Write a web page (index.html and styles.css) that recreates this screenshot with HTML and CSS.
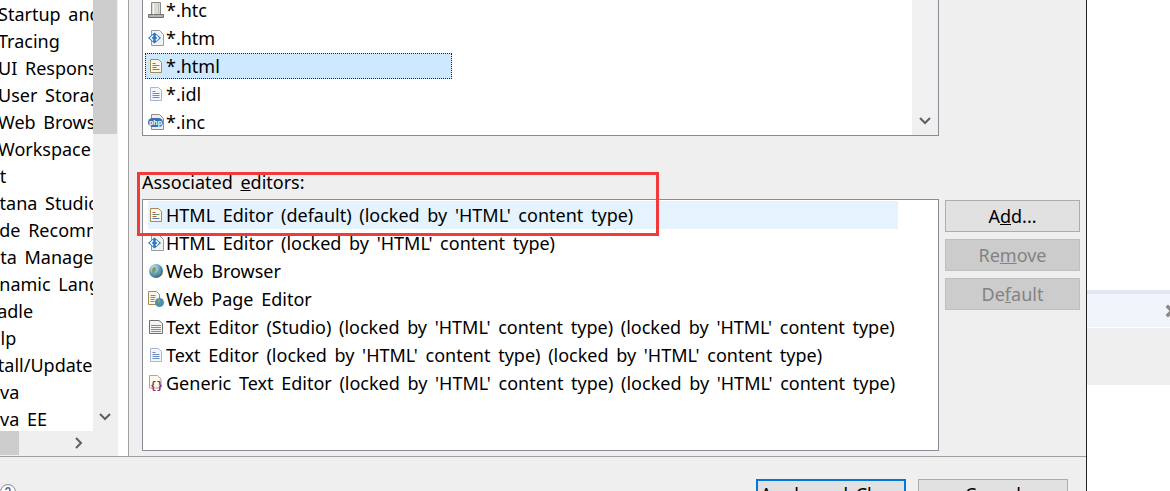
FILE: index.html
```html
<!DOCTYPE html>
<html lang="en">
<head>
<meta charset="utf-8">
<title>Preferences</title>
<link rel="stylesheet" href="styles.css">
</head>
<body>
<svg class="defs" width="0" height="0" aria-hidden="true">
  <symbol id="i-htc" viewBox="0 0 16 16">
    <path d="M3.500.5h9v12h-9z" fill="#dcdcd8" stroke="#8a8a86"/>
    <path d="M.5 12.500h15v3H.5z" fill="#b4b4b0" stroke="#6f6f68"/>
    <path d="M5.500 1.500v11" stroke="#f4f4f2"/>
    <path d="M10.500 1.500v11" stroke="#bcbcb8"/>
  </symbol>
  <symbol id="i-htm" viewBox="0 0 16 16">
    <path d="M3.500.5h8l4 4v11h-12z" fill="#f2f2f2" stroke="#9a9a9a"/>
    <path d="M6.500 2.500 0 8l6.500 5.500L13 8z" fill="#2c76c2"/>
    <path d="M5.200 5.500 2.700 8l2.500 2.500M7.800 5.500 10.300 8l-2.500 2.500" fill="none" stroke="#fff" stroke-width="1.500"/>
  </symbol>
  <symbol id="i-html" viewBox="0 0 16 16">
    <path d="M2.500 1.500h8l3 3v10h-11z" fill="#fbf6e8" stroke="#a68a55"/>
    <path d="M4.500 5.500h3" stroke="#c65a4a"/>
    <path d="M4.500 7.500h7" stroke="#5a9a5a"/>
    <path d="M4.500 9.500h4" stroke="#c65a4a"/>
    <path d="M4.500 11.500h7" stroke="#5a7ac0"/>
  </symbol>
  <symbol id="i-idl" viewBox="0 0 16 16">
    <path d="M2.500 1.500h8l3 3v10h-11z" fill="#f3f6fc" stroke="#a9b6cf"/>
    <path d="M4.500 5.500h3M4.500 7.500h7M4.500 9.500h7M4.500 11.500h7" stroke="#6b8cc4"/>
  </symbol>
  <symbol id="i-php" viewBox="0 0 16 16">
    <path d="M3.500.5h8l4 4v11h-12z" fill="#ececec" stroke="#8f8f8f"/>
    <rect x="0" y="4" width="15" height="9" rx="4.500" fill="#3c70b2"/>
    <text x="7.500" y="11" font-size="7" font-weight="700" text-anchor="middle" fill="#fff" font-family="Liberation Sans, sans-serif">php</text>
  </symbol>
  <symbol id="i-globe" viewBox="0 0 16 16">
    <defs><radialGradient id="g-globe" cx=".35" cy=".3" r=".8"><stop offset="0" stop-color="#dceef5"/><stop offset=".55" stop-color="#5d9ab8"/><stop offset="1" stop-color="#2b5a78"/></radialGradient></defs>
    <circle cx="8" cy="8" r="7" fill="url(#g-globe)"/>
    <path d="M5 4.500c2-1 3 0 3 1.500S6 9 5 11.500C4 9 3.500 7 5 4.500zM10 9l3-1-1.500 4z" fill="#7d9a62"/>
  </symbol>
  <symbol id="i-page" viewBox="0 0 16 16">
    <path d="M.5.5h8l3 3v10h-11z" fill="#f8f6ea" stroke="#a68a55"/>
    <path d="M2.500 4.500h5M2.500 6.500h5M2.500 8.500h4M2.500 10.500h4" stroke="#6b8cc4"/>
    <circle cx="11.500" cy="11.500" r="4.500" fill="#4c8fb5"/>
    <path d="M10 8.500c1.500-.5 2.500.5 2 2l-2 2z" fill="#86a96a"/>
  </symbol>
  <symbol id="i-text" viewBox="0 0 16 16">
    <path d="M1.500 1.500h9.500l3.500 3v10h-13z" fill="#f4f4f4" stroke="#6f6f6f"/>
    <path d="M3 6.500h10M3 8.500h10M3 10.500h10M3 12.500h10" stroke="#8a8a8a"/>
  </symbol>
  <symbol id="i-generic" viewBox="0 0 16 16">
    <path d="M1.500.5h8l3.500 3.500v9h-11.500z" fill="#fbf8ec" stroke="#b5a77f"/>
    <text x="8.500" y="14" font-size="10" font-weight="700" text-anchor="middle" fill="#8a1a7a" font-family="Liberation Mono, monospace">{}</text>
  </symbol>
  <symbol id="i-down" viewBox="0 0 12 8"><path d="M1 1l5 5 5-5" fill="none" stroke="#606060" stroke-width="2"/></symbol>
  <symbol id="i-right" viewBox="0 0 8 12"><path d="M1 1l5 5-5 5" fill="none" stroke="#606060" stroke-width="2"/></symbol>
</svg>

<div class="dialog">
  <div class="main">
    <div class="nav">
      <div class="nav-top">
        <div class="tree">
          <div class="node lvl1">Startup and Shutdown</div>
          <div class="node lvl1">Tracing</div>
          <div class="node lvl1">UI Responsiveness</div>
          <div class="node lvl1">User Storage</div>
          <div class="node lvl1">Web Browser</div>
          <div class="node lvl1">Workspace</div>
          <div class="node lvl0">Ant</div>
          <div class="node lvl0">Aptana Studio</div>
          <div class="node lvl0">Code Recommenders</div>
          <div class="node lvl0">Data Management</div>
          <div class="node lvl0">Dynamic Languages</div>
          <div class="node lvl0">Gradle</div>
          <div class="node lvl0">Help</div>
          <div class="node lvl0 wide-stem">Install/Update</div>
          <div class="node lvl0 narrow-stem">Java</div>
          <div class="node lvl0 narrow-stem">Java EE</div>
        </div>
        <div class="vbar">
          <div class="vthumb"></div>
          <svg class="arrow-down"><use href="#i-down"/></svg>
        </div>
      </div>
      <div class="hbar">
        <div class="hthumb"></div>
        <svg class="arrow-right"><use href="#i-right"/></svg>
      </div>
    </div>
    <div class="sash"></div>
    <div class="content">
      <div class="lists">
        <div class="types">
          <div class="types-rows">
            <div class="row"><svg class="icon"><use href="#i-htc"/></svg>*.htc</div>
            <div class="row"><svg class="icon"><use href="#i-htm"/></svg>*.htm</div>
            <div class="row selected"><svg class="icon"><use href="#i-html"/></svg>*.html</div>
            <div class="row"><svg class="icon"><use href="#i-idl"/></svg>*.idl</div>
            <div class="row"><svg class="icon"><use href="#i-php"/></svg>*.inc</div>
          </div>
          <div class="list-bar">
            <svg class="arrow-down"><use href="#i-down"/></svg>
          </div>
        </div>
        <div class="label">Associated <u>e</u>ditors:</div>
        <div class="editors">
          <div class="row hot"><svg class="icon"><use href="#i-html"/></svg>HTML Editor (default) (locked by 'HTML' content type)</div>
          <div class="row"><svg class="icon"><use href="#i-htm"/></svg>HTML Editor (locked by 'HTML' content type)</div>
          <div class="row"><svg class="icon"><use href="#i-globe"/></svg>Web Browser</div>
          <div class="row"><svg class="icon"><use href="#i-page"/></svg>Web Page Editor</div>
          <div class="row"><svg class="icon"><use href="#i-text"/></svg>Text Editor (Studio) (locked by 'HTML' content type) (locked by 'HTML' content type)</div>
          <div class="row"><svg class="icon"><use href="#i-idl"/></svg>Text Editor (locked by 'HTML' content type) (locked by 'HTML' content type)</div>
          <div class="row"><svg class="icon"><use href="#i-generic"/></svg>Generic Text Editor (locked by 'HTML' content type) (locked by 'HTML' content type)</div>
        </div>
      </div>
      <div class="actions">
        <button class="btn" type="button">A<u>d</u>d...</button>
        <button class="btn off" type="button" disabled>Re<u>m</u>ove</button>
        <button class="btn off" type="button" disabled>De<u>f</u>ault</button>
      </div>
    </div>
  </div>
  <div class="footer">
    <svg class="help" viewBox="0 0 16 16"><circle cx="8" cy="8" r="7.500" fill="#fff" stroke="#8a8a8a"/><path d="M6 6c0-3 4-3 4 0 0 1.500-2 1.500-2 3" fill="none" stroke="#4a6fa5" stroke-width="1.500"/></svg>
    <div class="footer-btns">
      <button class="btn wide primary" type="button">Apply and Close</button>
      <button class="btn wide" type="button">Cancel</button>
    </div>
  </div>
  <div class="callout"></div>
</div>

<div class="behind">
  <div class="strip"></div>
  <div class="tab">
    <svg class="tab-x" viewBox="0 0 16 16"><path d="M2 2l12 12M14 2 2 14" stroke="#8a8a8a" stroke-width="4"/></svg>
  </div>
  <div class="under"></div>
</div>
</body>
</html>
```
FILE: styles.css
```css
* { box-sizing: border-box; }
html, body { margin: 0; padding: 0; }
body {
  width: 1170px;
  height: 491px;
  overflow: hidden;
  display: flex;
  background: #fff;
  font-family: "Noto Sans", "Open Sans", sans-serif;
  font-size: 18px;
  word-spacing: 3px;
  color: #000;
}
.defs { position: absolute; }

.dialog {
  position: relative;
  width: 1087px;
  height: 491px;
  flex: none;
  overflow: hidden;
  background: #efefef;
  border-right: 1px solid #222;
}
.main { display: flex; height: 457px; border-bottom: 1px solid #a0a0a0; }

.nav { width: 118px; flex: none; }
.nav-top { display: flex; height: 431px; }
.tree {
  width: 93px;
  padding-top: 1px;
  overflow: hidden;
  background: #fff;
  white-space: nowrap;
}
.node { height: 27px; line-height: 27px; }
.lvl1 { margin-left: -2px; }
.lvl0 { margin-left: -23px; }
.lvl0.wide-stem { margin-left: -28px; }
.lvl0.narrow-stem { margin-left: -15px; }
.vbar { position: relative; width: 25px; }
.vthumb { width: 24px; height: 134px; background: #cdcdcd; }
.arrow-down { position: absolute; width: 12px; height: 8px; right: 7px; bottom: 10px; }
.hbar { position: relative; height: 24px; }
.hthumb { width: 19px; height: 24px; background: #cdcdcd; }
.arrow-right { position: absolute; width: 8px; height: 12px; left: 75px; top: 6px; }

.sash { width: 11px; flex: none; background: #fff; border-right: 1px solid #a0a0a0; }

.content { flex: 1; display: flex; gap: 6px; padding-left: 13px; min-width: 0; }
.lists { width: 797px; flex: none; }
.types {
  position: relative;
  height: 136px;
  overflow: hidden;
  background: #fff;
  border: 1px solid #888c94;
  border-top: 0;
}
.types-rows { margin-top: -4px; }
.list-bar { position: absolute; top: 0; right: 0; bottom: 0; width: 26px; background: #f0f0f0; }
.row {
  display: flex;
  align-items: center;
  height: 28px;
  padding-left: 5px;
  padding-bottom: 1px;
  white-space: nowrap;
}
.icon { width: 16px; height: 16px; margin-right: 2px; flex: none; }
.selected {
  height: 26px;
  margin: 1px 0;
  margin-left: 2px;
  width: 307px;
  padding-left: 3px;
  background: #cde8ff;
  outline: 1px dotted #222;
  outline-offset: -1px;
}
.label { height: 28px; line-height: 26px; margin-top: 33px; margin-bottom: 2px; }
.editors {
  height: 252px;
  padding-top: 1px;
  background: #fff;
  border: 1px solid #888c94;
  overflow: hidden;
}
.editors .row { margin-left: 5px; padding-left: 0; }
.hot { width: 750px; background: #e5f3ff; }

.actions { width: 135px; flex: none; display: flex; flex-direction: column; gap: 7px; padding-top: 200px; }
.btn {
  width: 135px;
  height: 32px;
  padding: 0 0 1px;
  background: #e1e1e1;
  border: 1px solid #adadad;
  font: inherit;
  word-spacing: inherit;
  color: #000;
}
.off { background: #ccc; border-color: #bfbfbf; color: #838383; }

.footer { display: flex; justify-content: space-between; padding: 22px 18px 0 0; }
.help { width: 16px; height: 16px; margin-top: 5px; flex: none; }
.footer-btns { display: flex; gap: 12px; }
.wide { width: 150px; height: 34px; padding-bottom: 5px; }
.primary { border: 2px solid #0078d7; }

.callout {
  position: absolute;
  left: 137px;
  top: 172px;
  width: 522px;
  height: 64px;
  border: 3px solid #f33a3a;
}

.behind { flex: 1; padding-top: 290px; }
.strip { height: 4px; background: #e3e7f5; }
.tab { height: 33px; background: #f2f4fb; overflow: hidden; display: flex; justify-content: flex-end; align-items: center; }
.tab-x { width: 14px; height: 18px; margin-right: -9px; flex: none; }
.under { height: 57px; margin-top: 1px; background: #efefef; }
```
